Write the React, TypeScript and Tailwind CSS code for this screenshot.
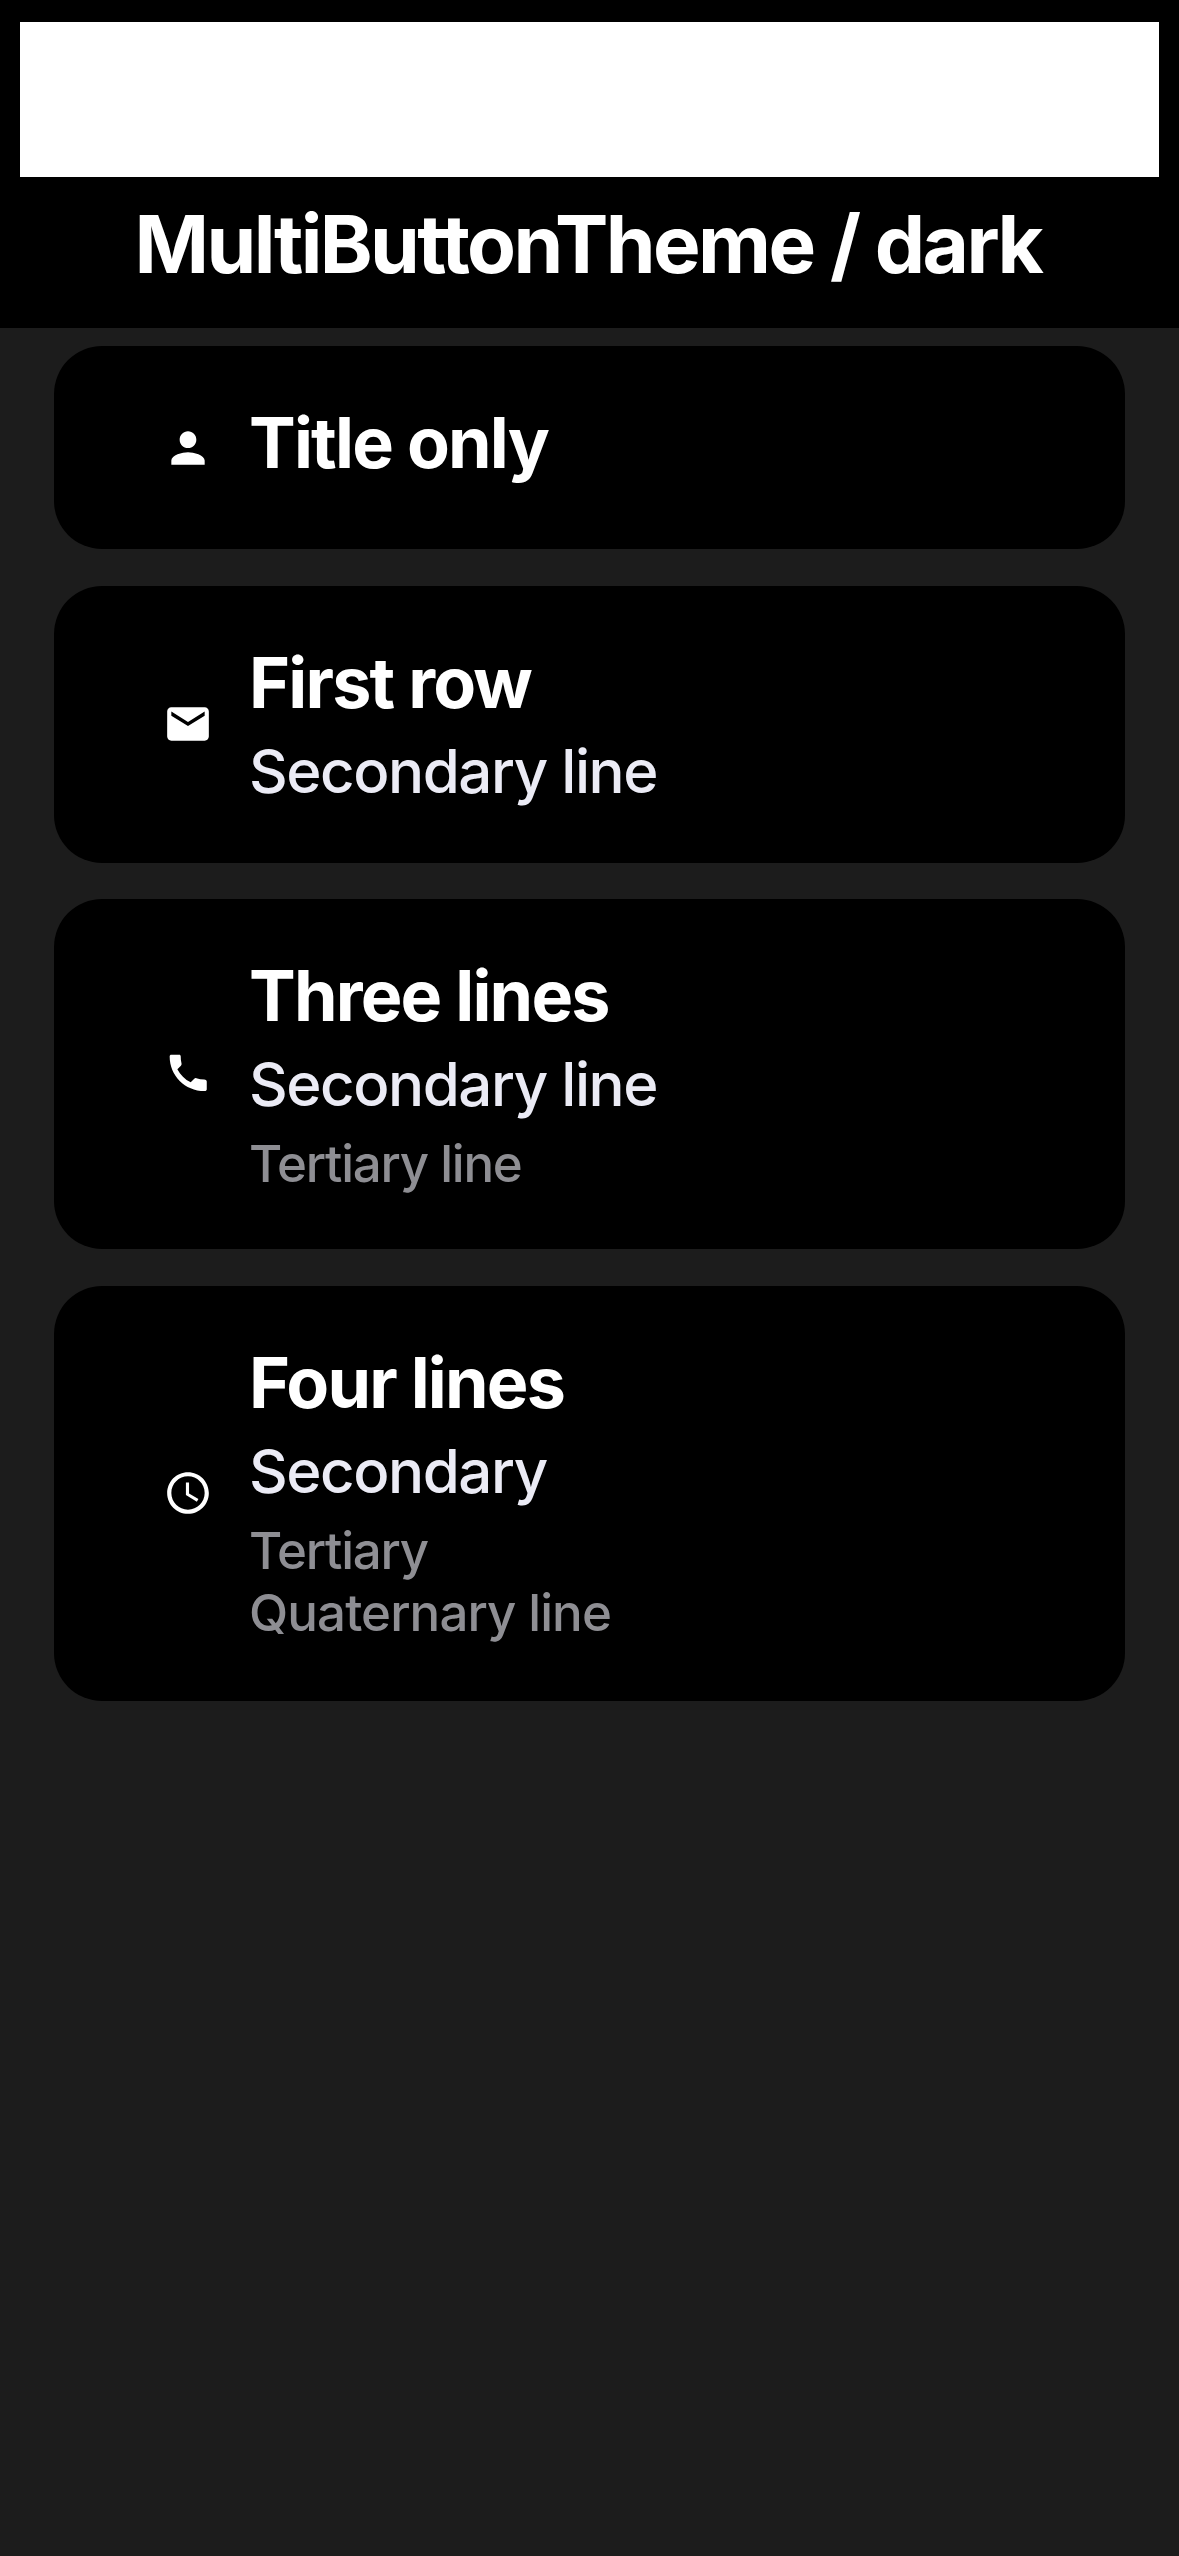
// App.tsx
type Row = {
  title: string;
  secondary?: string;
  tertiary?: string;
  quaternary?: string;
  icon: string[];
};

const ROWS: Row[] = [
  {
    title: "Title only",
    icon: ["M12 12c2.21 0 4-1.79 4-4s-1.79-4-4-4-4 1.79-4 4 1.79 4 4 4zm0 2c-2.67 0-8 1.34-8 4v2h16v-2c0-2.66-5.33-4-8-4z"],
  },
  {
    title: "First row",
    secondary: "Secondary line",
    icon: ["M20 4H4c-1.1 0-1.99.9-1.99 2L2 18c0 1.1.9 2 2 2h16c1.1 0 2-.9 2-2V6c0-1.1-.9-2-2-2zm0 4l-8 5-8-5V6l8 5 8-5v2z"],
  },
  {
    title: "Three lines",
    secondary: "Secondary line",
    tertiary: "Tertiary line",
    icon: ["M4 2.8h3.8c.4 0 .7.3.7.7 0 1.2.1 2.4.4 3.5.1.4 0 .7-.3 1L6.9 9.7c1.4 2.7 3.6 4.9 6.4 6.3l1.7-1.7c.3-.3.6-.4 1-.3 1.2.4 2.5.6 3.8.6.6 0 1.2.4 1.2 1v3.7c0 .5-.4.9-.9.9C10.6 20.3 3.2 12.8 3.2 3.6c0-.5.3-.8.8-.8z"],
  },
  {
    title: "Four lines",
    secondary: "Secondary",
    tertiary: "Tertiary",
    quaternary: "Quaternary line",
    icon: [
      "M11.99 2C6.47 2 2 6.48 2 12s4.47 10 9.99 10C17.52 22 22 17.52 22 12S17.52 2 11.99 2zM12 20c-4.42 0-8-3.58-8-8s3.58-8 8-8 8 3.58 8 8-3.58 8-8 8z",
      "M12.5 7H11v6l5.25 3.15.75-1.23-4.5-2.67z",
    ],
  },
];

function MultiButton({ row }: { row: Row }) {
  return (
    <div className="flex items-center gap-[36px] rounded-[48px] bg-black pl-[109px] pr-10 pt-[51px] pb-[61px]">
      <svg viewBox="0 0 24 24" className="h-[50px] w-[50px] shrink-0 translate-y-[5px] fill-white">
        {row.icon.map((d) => (
          <path key={d} d={d} />
        ))}
      </svg>
      <div className="flex flex-col">
        <div className="text-[70px] leading-[91px] font-bold tracking-[-1.8px] text-white">{row.title}</div>
        {row.secondary && <div className="mt-[12px] text-[60px] leading-[62px] font-[450] tracking-[-1.45px] text-[#ebebf5]">{row.secondary}</div>}
        {row.tertiary && <div className="mt-[24px] text-[51px] leading-[49px] font-[450] tracking-[-1.25px] text-[#8e8e93]">{row.tertiary}</div>}
        {row.quaternary && <div className="mt-[10px] text-[51px] leading-[55px] font-[450] tracking-[-0.9px] text-[#8e8e93]">{row.quaternary}</div>}
      </div>
    </div>
  );
}

export default function App() {
  return (
    <div className="min-h-[2556px] bg-[#1c1c1c] font-['Inter',sans-serif]">
      <header className="h-[328px] bg-black px-[20px] pt-[22px]">
        <div className="h-[155px] bg-white" />
        <h1 className="mt-[16px] pr-[3px] text-center text-[80px] leading-[102px] font-bold tracking-[-2.6px] text-white">
          MultiButtonTheme / dark
        </h1>
      </header>
      <main className="flex flex-col gap-[36.5px] px-[54px] pt-[18px]">
        {ROWS.map((row) => (
          <MultiButton key={row.title} row={row} />
        ))}
      </main>
    </div>
  );
}
